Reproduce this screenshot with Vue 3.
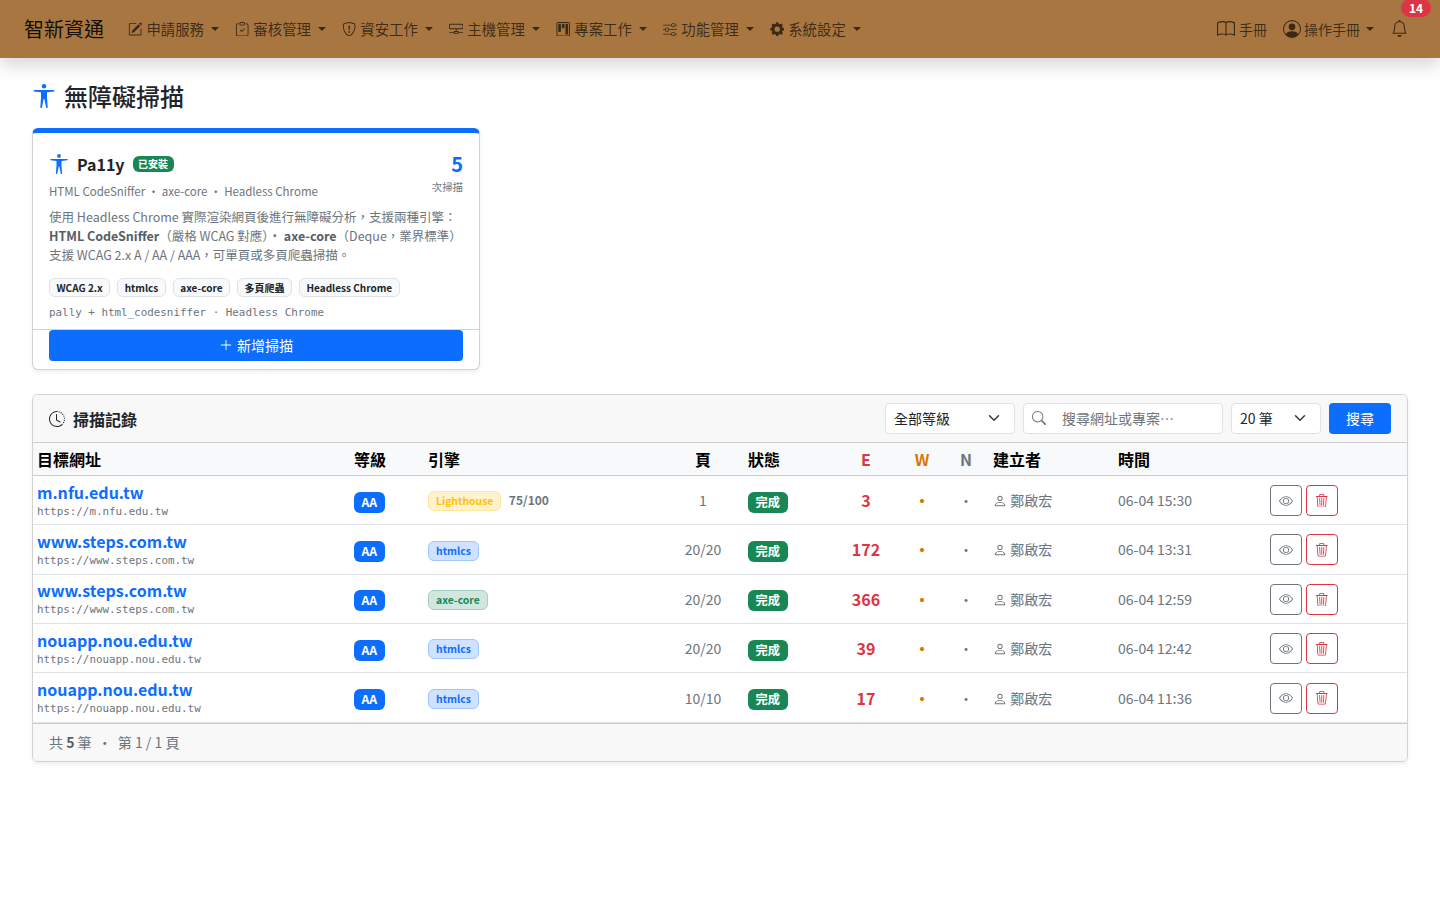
<template>
  <div class="page">
    <nav class="navbar">
      <a class="brand">智新資通</a>
      <ul class="nav-menu">
        <li v-for="item in menus" :key="item.label" class="nav-item">
          <svg class="nav-icon" viewBox="0 0 16 16" fill="currentColor"><path v-for="d in icons[item.icon]" :key="d" fill-rule="evenodd" :d="d" /></svg>
          <span>{{ item.label }}</span>
          <i class="caret"></i>
        </li>
      </ul>
      <div class="nav-right">
        <a class="nav-plain">
          <svg class="book-icon" viewBox="0 0 16 16" fill="currentColor"><path v-for="d in icons.book" :key="d" :d="d" /></svg>
          <span>手冊</span>
        </a>
        <a class="nav-plain user">
          <svg class="user-icon" viewBox="0 0 16 16" fill="currentColor"><path v-for="d in icons.personCircle" :key="d" fill-rule="evenodd" :d="d" /></svg>
          <span>操作手冊</span>
          <i class="caret"></i>
        </a>
        <a class="bell">
          <svg viewBox="0 0 16 16" fill="currentColor"><path v-for="d in icons.bell" :key="d" :d="d" /></svg>
          <span class="bell-badge">14</span>
        </a>
      </div>
    </nav>

    <main class="content">
      <h1 class="page-title">
        <svg viewBox="0 0 16 16" fill="currentColor"><path :d="icons.access[0]" /></svg>
        <span>無障礙掃描</span>
      </h1>

      <section class="tool-card">
        <div class="tool-body">
          <div class="tool-head">
            <div>
              <div class="tool-name">
                <svg viewBox="0 0 16 16" fill="currentColor"><path :d="icons.access[0]" /></svg>
                <strong>Pa11y</strong>
                <span class="installed">已安裝</span>
              </div>
              <div class="tool-sub">HTML CodeSniffer ・ axe-core ・ Headless Chrome</div>
            </div>
            <div class="tool-count">
              <b>5</b>
              <small>次掃描</small>
            </div>
          </div>
          <p class="tool-desc">
            使用 Headless Chrome 實際渲染網頁後進行無障礙分析，支援兩種引擎：<br />
            <b>HTML CodeSniffer</b>（嚴格 WCAG 對應）・ <b>axe-core</b>（Deque，業界標準）<br />
            支援 WCAG 2.x A / AA / AAA，可單頁或多頁爬蟲掃描。
          </p>
          <div class="chips">
            <span v-for="c in chips" :key="c" class="chip">{{ c }}</span>
          </div>
          <div class="tool-cmd">pally + html_codesniffer · Headless Chrome</div>
        </div>
        <div class="tool-foot">
          <button class="new-btn">
            <svg viewBox="0 0 16 16" fill="currentColor"><path fill-rule="evenodd" :d="icons.plus[0]" /></svg>
            新增掃描
          </button>
        </div>
      </section>

      <section class="records">
        <header class="records-head">
          <div class="records-title">
            <svg viewBox="0 0 16 16" fill="currentColor"><path v-for="d in icons.clock" :key="d" :d="d" /></svg>
            <span>掃描記錄</span>
          </div>
          <form class="filters" @submit.prevent>
            <div class="select level">全部等級<svg class="chev" viewBox="0 0 16 16"><path d="m2 5 6 6 6-6" /></svg></div>
            <div class="search">
              <svg viewBox="0 0 16 16" fill="currentColor"><path :d="icons.search[0]" /></svg>
              <span>搜尋網址或專案⋯</span>
            </div>
            <div class="select per">20 筆<svg class="chev" viewBox="0 0 16 16"><path d="m2 5 6 6 6-6" /></svg></div>
            <button class="search-btn">搜尋</button>
          </form>
        </header>

        <table class="scan-table">
          <colgroup>
            <col v-for="w in colWidths" :key="w.k" :style="{ width: w.v + 'px' }" />
          </colgroup>
          <thead>
            <tr>
              <th>目標網址</th>
              <th>等級</th>
              <th>引擎</th>
              <th class="center">頁</th>
              <th>狀態</th>
              <th class="center err">E</th>
              <th class="center warn">W</th>
              <th class="center note">N</th>
              <th>建立者</th>
              <th>時間</th>
              <th></th>
            </tr>
          </thead>
          <tbody>
            <tr v-for="r in rows" :key="r.time">
              <td class="target">
                <a class="host">{{ r.host }}</a>
                <div class="url">{{ r.url }}</div>
              </td>
              <td><span class="badge level-aa">AA</span></td>
              <td>
                <span class="engine" :class="r.engineClass">{{ r.engine }}</span>
                <span v-if="r.score" class="score">{{ r.score }}</span>
              </td>
              <td class="center pages">{{ r.pages }}</td>
              <td><span class="badge done">完成</span></td>
              <td class="center err-num">{{ r.errors }}</td>
              <td class="center dot-w">•</td>
              <td class="center dot-n">•</td>
              <td class="creator">
                <svg viewBox="0 0 16 16" fill="currentColor"><path :d="icons.person[0]" /></svg>
                鄭啟宏
              </td>
              <td class="time">{{ r.time }}</td>
              <td>
                <div class="actions">
                  <button class="act view"><svg viewBox="0 0 16 16" fill="currentColor"><path v-for="d in icons.eye" :key="d" :d="d" /></svg></button>
                  <button class="act del"><svg viewBox="0 0 16 16" fill="currentColor"><path :d="icons.trash[0]" /></svg></button>
                </div>
              </td>
            </tr>
          </tbody>
        </table>

        <footer class="records-foot">共 <b>5</b> 筆 <span class="sep">・</span> 第 1 / 1 頁</footer>
      </section>
    </main>
  </div>
</template>

<script setup>
const icons = {
  pencil: ['M15.502 1.94a.5.5 0 0 1 0 .706L14.459 3.69l-2-2L13.502.646a.5.5 0 0 1 .707 0l1.293 1.293zm-1.75 2.456-2-2L4.939 9.21a.5.5 0 0 0-.121.196l-.805 2.414a.25.25 0 0 0 .316.316l2.414-.805a.5.5 0 0 0 .196-.12l6.813-6.814z', 'M1 13.5A1.5 1.5 0 0 0 2.5 15h11a1.5 1.5 0 0 0 1.5-1.5v-6a.5.5 0 0 0-1 0v6a.5.5 0 0 1-.5.5h-11a.5.5 0 0 1-.5-.5v-11a.5.5 0 0 1 .5-.5H9a.5.5 0 0 0 0-1H2.5A1.5 1.5 0 0 0 1 2.5v11z'],
  clipboard: ['M10.854 7.146a.5.5 0 0 1 0 .708l-3 3a.5.5 0 0 1-.708 0l-1.5-1.5a.5.5 0 1 1 .708-.708L7.5 9.793l2.646-2.647a.5.5 0 0 1 .708 0z', 'M4 1.5H3a2 2 0 0 0-2 2V14a2 2 0 0 0 2 2h10a2 2 0 0 0 2-2V3.5a2 2 0 0 0-2-2h-1v1h1a1 1 0 0 1 1 1V14a1 1 0 0 1-1 1H3a1 1 0 0 1-1-1V3.5a1 1 0 0 1 1-1h1v-1z', 'M9.5 1a.5.5 0 0 1 .5.5v1a.5.5 0 0 1-.5.5h-3a.5.5 0 0 1-.5-.5v-1a.5.5 0 0 1 .5-.5h3zm-3-1A1.5 1.5 0 0 0 5 1.5v1A1.5 1.5 0 0 0 6.5 4h3A1.5 1.5 0 0 0 11 2.5v-1A1.5 1.5 0 0 0 9.5 0h-3z'],
  shield: ['M5.338 1.59a61.44 61.44 0 0 0-2.837.856.481.481 0 0 0-.328.39c-.554 4.157.726 7.19 2.253 9.188a10.725 10.725 0 0 0 2.287 2.233c.346.244.652.42.893.533.12.057.218.095.293.118a.55.55 0 0 0 .101.025.615.615 0 0 0 .1-.025c.076-.023.174-.061.294-.118.24-.113.547-.29.893-.533a10.726 10.726 0 0 0 2.287-2.233c1.527-1.997 2.807-5.031 2.253-9.188a.48.48 0 0 0-.328-.39c-.651-.213-1.75-.56-2.837-.855C9.552 1.29 8.531 1.067 8 1.067c-.53 0-1.552.223-2.662.524zM5.072.56C6.157.265 7.31 0 8 0s1.843.265 2.928.56c1.11.3 2.229.655 2.887.87a1.54 1.54 0 0 1 1.044 1.262c.596 4.477-.787 7.795-2.465 9.99a11.775 11.775 0 0 1-2.517 2.453 7.159 7.159 0 0 1-1.048.625c-.28.132-.581.24-.829.24s-.548-.108-.829-.24a7.158 7.158 0 0 1-1.048-.625 11.777 11.777 0 0 1-2.517-2.453C1.928 10.487.545 7.169 1.141 2.692A1.54 1.54 0 0 1 2.185 1.43 62.456 62.456 0 0 1 5.072.56z', 'M7.001 11a1 1 0 1 1 2 0 1 1 0 0 1-2 0zM7.1 4.995a.905.905 0 1 1 1.8 0l-.35 3.507a.552.552 0 0 1-1.1 0L7.1 4.995z'],
  server: ['M1.5 2h13A1.5 1.5 0 0 1 16 3.5v3A1.5 1.5 0 0 1 14.5 8H8.5v2H10a1 1 0 0 1 1 1h4.5a.5.5 0 0 1 0 1H11a1 1 0 0 1-1 1H6a1 1 0 0 1-1-1H.5a.5.5 0 0 1 0-1H5a1 1 0 0 1 1-1h1.5V8h-6A1.5 1.5 0 0 1 0 6.5v-3A1.5 1.5 0 0 1 1.5 2zm0 1a.5.5 0 0 0-.5.5v3a.5.5 0 0 0 .5.5h13a.5.5 0 0 0 .5-.5v-3a.5.5 0 0 0-.5-.5h-13zM6 11v1h4v-1H6z'],
  kanban: ['M13.5 1a1 1 0 0 1 1 1v12a1 1 0 0 1-1 1h-11a1 1 0 0 1-1-1V2a1 1 0 0 1 1-1h11zm-11-1a2 2 0 0 0-2 2v12a2 2 0 0 0 2 2h11a2 2 0 0 0 2-2V2a2 2 0 0 0-2-2h-11z', 'M6.5 3a1 1 0 0 1 1-1h1a1 1 0 0 1 1 1v3a1 1 0 0 1-1 1h-1a1 1 0 0 1-1-1V3zm-4 0a1 1 0 0 1 1-1h1a1 1 0 0 1 1 1v7a1 1 0 0 1-1 1h-1a1 1 0 0 1-1-1V3zm8 0a1 1 0 0 1 1-1h1a1 1 0 0 1 1 1v10a1 1 0 0 1-1 1h-1a1 1 0 0 1-1-1V3z'],
  sliders: ['M11.5 2a1.5 1.5 0 1 0 0 3 1.5 1.5 0 0 0 0-3zM9.05 3a2.5 2.5 0 0 1 4.9 0H16v1h-2.05a2.5 2.5 0 0 1-4.9 0H0V3h9.05zM4.5 7a1.5 1.5 0 1 0 0 3 1.5 1.5 0 0 0 0-3zM2.05 8a2.5 2.5 0 0 1 4.9 0H16v1H6.95a2.5 2.5 0 0 1-4.9 0H0V8h2.05zm9.45 4a1.5 1.5 0 1 0 0 3 1.5 1.5 0 0 0 0-3zm-2.45 1a2.5 2.5 0 0 1 4.9 0H16v1h-2.05a2.5 2.5 0 0 1-4.9 0H0v-1h9.05z'],
  gear: ['M9.405 1.05c-.413-1.4-2.397-1.4-2.81 0l-.1.34a1.464 1.464 0 0 1-2.105.872l-.31-.17c-1.283-.698-2.686.705-1.987 1.987l.169.311c.446.82.023 1.841-.872 2.105l-.34.1c-1.4.413-1.4 2.397 0 2.81l.34.1a1.464 1.464 0 0 1 .872 2.105l-.17.31c-.698 1.283.705 2.686 1.987 1.987l.311-.169a1.464 1.464 0 0 1 2.105.872l.1.34c.413 1.4 2.397 1.4 2.81 0l.1-.34a1.464 1.464 0 0 1 2.105-.872l.31.17c1.283.698 2.686-.705 1.987-1.987l-.169-.311a1.464 1.464 0 0 1 .872-2.105l.34-.1c1.4-.413 1.4-2.397 0-2.81l-.34-.1a1.464 1.464 0 0 1-.872-2.105l.17-.31c.698-1.283-.705-2.686-1.987-1.987l-.311.169a1.464 1.464 0 0 1-2.105-.872l-.1-.34zM8 10.93a2.929 2.929 0 1 1 0-5.86 2.929 2.929 0 0 1 0 5.858z'],
  book: ['M1 2.828c.885-.37 2.154-.769 3.388-.893 1.33-.134 2.458.063 3.112.752v9.746c-.935-.53-2.12-.603-3.213-.493-1.18.12-2.37.461-3.287.811V2.828zm7.5-.141c.654-.689 1.782-.886 3.112-.752 1.234.124 2.503.523 3.388.893v9.923c-.918-.35-2.107-.692-3.287-.81-1.094-.111-2.278-.039-3.213.492V2.687zM8 1.783C7.015.936 5.587.81 4.287.94c-1.514.153-3.042.672-3.994 1.105A.5.5 0 0 0 0 2.5v11a.5.5 0 0 0 .707.455c.882-.4 2.303-.881 3.68-1.02 1.409-.142 2.59.087 3.223.877a.5.5 0 0 0 .78 0c.633-.79 1.814-1.019 3.222-.877 1.378.139 2.8.62 3.681 1.02A.5.5 0 0 0 16 13.5v-11a.5.5 0 0 0-.293-.455c-.952-.433-2.48-.952-3.994-1.105C10.413.809 8.985.936 8 1.783z'],
  personCircle: ['M11 6a3 3 0 1 1-6 0 3 3 0 0 1 6 0z', 'M0 8a8 8 0 1 1 16 0A8 8 0 0 1 0 8zm8-7a7 7 0 0 0-5.468 11.37C3.242 11.226 4.805 10 8 10s4.757 1.225 5.468 2.37A7 7 0 0 0 8 1z'],
  bell: ['M8 16a2 2 0 0 0 2-2H6a2 2 0 0 0 2 2zM8 1.918l-.797.161A4.002 4.002 0 0 0 4 6c0 .628-.134 2.197-.459 3.742-.16.767-.376 1.566-.663 2.258h10.244c-.287-.692-.502-1.49-.663-2.258C12.134 8.197 12 6.628 12 6a4.002 4.002 0 0 0-3.203-3.92L8 1.917zM14.22 12c.223.447.481.801.78 1H1c.299-.199.557-.553.78-1C2.68 10.2 3 6.88 3 6c0-2.42 1.72-4.44 4.005-4.901a1 1 0 1 1 1.99 0A5.002 5.002 0 0 1 13 6c0 .88.32 4.2 1.22 6z'],
  access: ['M9.5 1.5a1.5 1.5 0 1 1-3 0 1.5 1.5 0 0 1 3 0M6 5.5l-4.535-.442A.531.531 0 0 1 1.531 4H14.47a.531.531 0 0 1 .066 1.058L10 5.5V9l.452 6.42a.535.535 0 0 1-1.053.174L8.243 9.97c-.064-.252-.422-.252-.486 0l-1.156 5.624a.535.535 0 0 1-1.053-.174L6 9z'],
  clock: ['M8.515 1.019A7 7 0 0 0 8 1V0a8 8 0 0 1 .589.022l-.074.997zm2.004.45a7.003 7.003 0 0 0-.985-.299l.219-.976c.383.086.76.2 1.126.342l-.36.933zm1.37.71a7.01 7.01 0 0 0-.439-.27l.493-.87a8.025 8.025 0 0 1 .979.654l-.615.789a6.996 6.996 0 0 0-.418-.302zm1.834 1.79a6.99 6.99 0 0 0-.653-.796l.724-.69c.27.285.52.59.747.91l-.818.576zm.744 1.352a7.08 7.08 0 0 0-.214-.468l.893-.45a7.976 7.976 0 0 1 .45 1.088l-.95.313a7.023 7.023 0 0 0-.179-.483zm.53 2.507a6.991 6.991 0 0 0-.1-1.025l.985-.17c.067.386.106.778.116 1.17l-1 .025zm-.131 1.538c.033-.17.06-.339.081-.51l.993.123a7.957 7.957 0 0 1-.23 1.155l-.964-.267c.046-.165.086-.332.12-.501zm-.952 2.379c.184-.29.346-.594.486-.908l.914.405c-.16.36-.345.706-.555 1.038l-.845-.535zm-.964 1.205c.122-.122.239-.248.35-.378l.758.653a8.073 8.073 0 0 1-.401.432l-.707-.707z', 'M8 1a7 7 0 1 0 4.95 11.95l.707.707A8.001 8.001 0 1 1 8 0v1z', 'M7.5 3a.5.5 0 0 1 .5.5v5.21l3.248 1.856a.5.5 0 0 1-.496.868l-3.5-2A.5.5 0 0 1 7 9V3.5a.5.5 0 0 1 .5-.5z'],
  search: ['M11.742 10.344a6.5 6.5 0 1 0-1.397 1.398h-.001c.03.04.062.078.098.115l3.85 3.85a1 1 0 0 0 1.415-1.414l-3.85-3.85a1.007 1.007 0 0 0-.115-.1zM12 6.5a5.5 5.5 0 1 1-11 0 5.5 5.5 0 0 1 11 0z'],
  plus: ['M8 2a.5.5 0 0 1 .5.5v5h5a.5.5 0 0 1 0 1h-5v5a.5.5 0 0 1-1 0v-5h-5a.5.5 0 0 1 0-1h5v-5A.5.5 0 0 1 8 2Z'],
  eye: ['M16 8s-3-5.5-8-5.5S0 8 0 8s3 5.5 8 5.5S16 8 16 8zM1.173 8a13.133 13.133 0 0 1 1.66-2.043C4.12 4.668 5.88 3.5 8 3.5c2.12 0 3.879 1.168 5.168 2.457A13.133 13.133 0 0 1 14.828 8c-.058.087-.122.183-.195.288-.335.48-.83 1.12-1.465 1.755C11.879 11.332 10.119 12.5 8 12.5c-2.12 0-3.879-1.168-5.168-2.457A13.134 13.134 0 0 1 1.172 8z', 'M8 5.5a2.5 2.5 0 1 0 0 5 2.5 2.5 0 0 0 0-5zM4.5 8a3.5 3.5 0 1 1 7 0 3.5 3.5 0 0 1-7 0z'],
  trash: ['M6.5 1h3a.5.5 0 0 1 .5.5v1H6v-1a.5.5 0 0 1 .5-.5ZM11 2.5v-1A1.5 1.5 0 0 0 9.5 0h-3A1.5 1.5 0 0 0 5 1.5v1H2.506a.58.58 0 0 0-.01 0H1.5a.5.5 0 0 0 0 1h.538l.853 10.66A2 2 0 0 0 4.885 16h6.23a2 2 0 0 0 1.994-1.84l.853-10.66h.538a.5.5 0 0 0 0-1h-.995a.59.59 0 0 0-.01 0H11Zm1.958 1-.846 10.58a1 1 0 0 1-.997.92h-6.23a1 1 0 0 1-.997-.92L3.042 3.5h9.916Zm-7.487 1a.5.5 0 0 1 .528.47l.5 8.5a.5.5 0 0 1-.998.06L5 5.03a.5.5 0 0 1 .47-.53Zm5.058 0a.5.5 0 0 1 .47.53l-.5 8.5a.5.5 0 1 1-.998-.06l.5-8.5a.5.5 0 0 1 .528-.47ZM8 4.5a.5.5 0 0 1 .5.5v8.5a.5.5 0 0 1-1 0V5a.5.5 0 0 1 .5-.5Z'],
  person: ['M8 8a3 3 0 1 0 0-6 3 3 0 0 0 0 6Zm2-3a2 2 0 1 1-4 0 2 2 0 0 1 4 0Zm4 8c0 1-1 1-1 1H3s-1 0-1-1 1-4 6-4 6 3 6 4Zm-1-.004c-.001-.246-.154-.986-.832-1.664C11.516 10.68 10.289 10 8 10c-2.29 0-3.516.68-4.168 1.332-.678.678-.83 1.418-.832 1.664h10Z'],
}

const menus = [
  { label: '申請服務', icon: 'pencil' },
  { label: '審核管理', icon: 'clipboard' },
  { label: '資安工作', icon: 'shield' },
  { label: '主機管理', icon: 'server' },
  { label: '專案工作', icon: 'kanban' },
  { label: '功能管理', icon: 'sliders' },
  { label: '系統設定', icon: 'gear' },
]

const chips = ['WCAG 2.x', 'htmlcs', 'axe-core', '多頁爬蟲', 'Headless Chrome']

const colWidths = [
  { k: 'url', v: 317 }, { k: 'level', v: 74 }, { k: 'engine', v: 238 }, { k: 'pages', v: 82 },
  { k: 'status', v: 87 }, { k: 'e', v: 70 }, { k: 'w', v: 42 }, { k: 'n', v: 46 },
  { k: 'user', v: 125 }, { k: 'time', v: 152 }, { k: 'act', v: 141 },
]

const rows = [
  { host: 'm.nfu.edu.tw', url: 'https://m.nfu.edu.tw', engine: 'Lighthouse', engineClass: 'lh', score: '75/100', pages: '1', errors: 3, time: '06-04 15:30' },
  { host: 'www.steps.com.tw', url: 'https://www.steps.com.tw', engine: 'htmlcs', engineClass: 'cs', pages: '20/20', errors: 172, time: '06-04 13:31' },
  { host: 'www.steps.com.tw', url: 'https://www.steps.com.tw', engine: 'axe-core', engineClass: 'axe', pages: '20/20', errors: 366, time: '06-04 12:59' },
  { host: 'nouapp.nou.edu.tw', url: 'https://nouapp.nou.edu.tw', engine: 'htmlcs', engineClass: 'cs', pages: '20/20', errors: 39, time: '06-04 12:42' },
  { host: 'nouapp.nou.edu.tw', url: 'https://nouapp.nou.edu.tw', engine: 'htmlcs', engineClass: 'cs', pages: '10/10', errors: 17, time: '06-04 11:36' },
]
</script>

<style>
html, body {
  margin: 0;
  background: #fff;
}
</style>

<style scoped>
.page {
  min-height: 900px;
  font-family: "Noto Sans CJK TC", "Noto Sans", sans-serif;
  font-size: 14px;
  color: #212529;
}

/* navbar */
.navbar {
  height: 58px;
  box-sizing: border-box;
  display: flex;
  align-items: center;
  padding: 0 24px;
  background: #a87741;
  box-shadow: 0 8px 16px rgba(0, 0, 0, .15);
  position: relative;
}
.brand {
  font-size: 20px;
  color: rgba(0, 0, 0, .9);
  margin-right: 16px;
  line-height: 30px;
}
.nav-menu {
  display: flex;
  list-style: none;
  margin: 0;
  padding: 0;
  flex: 1;
}
.nav-item {
  display: flex;
  align-items: center;
  padding: 0 8px;
  color: rgba(0, 0, 0, .65);
  font-size: 14.4px;
}
.nav-item span {
  margin-top: -2px;
}
.nav-icon {
  width: 14.4px;
  height: 14.4px;
  margin-right: 4px;
}
.caret {
  display: inline-block;
  margin-left: 7px;
  border-top: 4px solid;
  border-left: 4px solid transparent;
  border-right: 4px solid transparent;
}
.nav-right {
  display: flex;
  align-items: center;
  color: rgba(0, 0, 0, .65);
}
.nav-plain {
  display: flex;
  align-items: center;
}
.book-icon {
  width: 18px;
  height: 18px;
  margin-right: 4px;
}
.user {
  margin-left: 16px;
}
.user .caret {
  margin-left: 6px;
}
.user-icon {
  width: 18px;
  height: 18px;
  margin-right: 3px;
}
.bell {
  position: relative;
  margin-left: 17px;
  margin-right: 8px;
  width: 17px;
  height: 17px;
  display: block;
  margin-top: -2px;
}
.bell svg {
  width: 17px;
  height: 17px;
  display: block;
}
.bell-badge {
  position: absolute;
  top: -21px;
  left: 10px;
  width: 30px;
  height: 18px;
  border-radius: 9px;
  background: #dc3545;
  color: #fff;
  font-size: 12px;
  font-weight: 700;
  line-height: 18px;
  text-align: center;
}

/* page */
.content {
  padding: 21px 32px 0;
}
.page-title {
  display: flex;
  align-items: center;
  margin: 0 0 15px;
  font-size: 24px;
  font-weight: 500;
  line-height: 34px;
}
.page-title svg {
  width: 24px;
  height: 24px;
  color: #0d6efd;
  margin-right: 8px;
}

/* tool card */
.tool-card {
  width: 448px;
  box-sizing: border-box;
  border: 1px solid rgba(0, 0, 0, .175);
  border-top: 5px solid #0d6efd;
  border-radius: 6px;
  box-shadow: 0 2px 4px rgba(0, 0, 0, .075);
  background: #fff;
  margin-bottom: 24px;
}
.tool-body {
  padding: 19px 16px 8px;
}
.tool-head {
  display: flex;
  justify-content: space-between;
}
.tool-name {
  display: flex;
  align-items: center;
}
.tool-name svg {
  width: 20px;
  height: 20px;
  color: #0d6efd;
  margin-right: 8px;
}
.tool-name strong {
  font-size: 16px;
  font-weight: 700;
  margin-right: 8px;
  line-height: 24px;
}
.installed {
  background: #198754;
  color: #fff;
  font-size: 10px;
  font-weight: 700;
  line-height: 16px;
  padding: 0 5.5px;
  border-radius: 6px;
}
.tool-sub {
  font-size: 11.5px;
  color: #6c757d;
  line-height: 18px;
  margin-top: 6px;
}
.tool-count {
  text-align: right;
}
.tool-count b {
  display: block;
  font-size: 20px;
  font-weight: 700;
  color: #0d6efd;
  line-height: 24px;
}
.tool-count small {
  display: block;
  font-size: 10.4px;
  color: #6c757d;
  line-height: 20px;
  margin-top: 1px;
}
.tool-desc {
  margin: 6.5px 0 0;
  font-size: 12.5px;
  line-height: 19px;
  color: #6c757d;
}
.tool-desc b {
  font-weight: 700;
  color: #565e64;
}
.chips {
  display: flex;
  gap: 7px;
  margin-top: 14px;
}
.chip {
  font-size: 10px;
  font-weight: 700;
  line-height: 15px;
  padding: 1px 6.5px;
  border: 1px solid #dee2e6;
  border-radius: 6px;
  background: #f8f9fa;
  color: #212529;
}
.tool-cmd {
  font-family: "DejaVu Sans Mono", monospace;
  font-size: 10.88px;
  line-height: 16px;
  color: #6c757d;
  margin-top: 8px;
}
.tool-foot {
  border-top: 1px solid rgba(0, 0, 0, .175);
  padding: 0 16px 8px;
}
.new-btn {
  display: flex;
  align-items: center;
  justify-content: center;
  width: 100%;
  height: 31px;
  border: none;
  border-radius: 4px;
  background: #0d6efd;
  color: #fff;
  font: inherit;
  font-size: 14px;
}
.new-btn svg {
  width: 14px;
  height: 14px;
  margin-right: 4px;
}

/* records */
.records {
  border: 1px solid rgba(0, 0, 0, .175);
  border-radius: 6px;
  box-shadow: 0 2px 4px rgba(0, 0, 0, .075);
  overflow: hidden;
}
.records-head {
  height: 48px;
  box-sizing: border-box;
  display: flex;
  align-items: center;
  justify-content: space-between;
  padding: 0 16px;
  background: #f8f8f8;
  border-bottom: 1px solid rgba(0, 0, 0, .175);
}
.records-title {
  display: flex;
  align-items: center;
  font-size: 16px;
  font-weight: 700;
  margin-top: 2px;
}
.records-title svg {
  width: 16px;
  height: 16px;
  margin-right: 8px;
}
.filters {
  display: flex;
  align-items: center;
  gap: 8px;
}
.select, .search {
  height: 31px;
  box-sizing: border-box;
  display: flex;
  align-items: center;
  border: 1px solid #dee2e6;
  border-radius: 4px;
  background: #fff;
}
.select {
  justify-content: space-between;
  padding: 0 14px 0 8px;
}
.level { width: 130px; }
.per { width: 90px; }
.chev {
  width: 12px;
  height: 12px;
  fill: none;
  stroke: #343a40;
  stroke-width: 2;
  stroke-linecap: round;
  stroke-linejoin: round;
}
.search {
  width: 200px;
  padding-left: 8px;
  color: #6c757d;
}
.search svg {
  width: 14px;
  height: 14px;
  margin-right: 16px;
}
.search-btn {
  width: 62px;
  height: 31px;
  border: none;
  border-radius: 4px;
  background: #0d6efd;
  color: #fff;
  font: inherit;
}

/* table */
.scan-table {
  width: 100%;
  table-layout: fixed;
  border-collapse: collapse;
}
.scan-table th {
  height: 32.4px;
  padding: 0 4px;
  background: #f8f9fa;
  text-align: left;
  font-size: 16px;
  font-weight: 700;
  color: #000;
  border-bottom: 1px solid rgba(0, 0, 0, .2);
}
.scan-table td {
  height: 48.4px;
  padding: 0 4px;
  border-bottom: 1px solid #dee2e6;
  vertical-align: middle;
}
.scan-table th.center, .scan-table td.center {
  text-align: center;
}
.scan-table th.err { color: #dc3545; }
.scan-table th.warn { color: #d97706; }
.scan-table th.note { color: #6c757d; }
.host {
  display: block;
  font-size: 16px;
  font-weight: 700;
  color: #0d6efd;
  line-height: 20px;
  margin-bottom: 3px;
}
.url {
  font-family: "DejaVu Sans Mono", monospace;
  font-size: 10.88px;
  line-height: 14px;
  color: #6c757d;
}
.badge {
  display: inline-block;
  padding: 0 7.5px;
  font-size: 12.25px;
  font-weight: 700;
  line-height: 21px;
  border-radius: 6px;
  color: #fff;
  vertical-align: middle;
  margin-top: 4px;
}
.level-aa { background: #0d6efd; }
.done { background: #198754; }
.engine {
  display: inline-block;
  font-size: 10.4px;
  font-weight: 700;
  line-height: 18px;
  padding: 0 7px;
  border-radius: 6px;
  border: 1px solid;
  vertical-align: middle;
}
.lh { background: #fff3cd; border-color: #ffe69c; color: #ffc107; }
.cs { background: #cfe2ff; border-color: #9ec5fe; color: #0d6efd; }
.axe { background: #d1e7dd; border-color: #a3cfbb; color: #198754; }
.score {
  margin-left: 7.5px;
  font-size: 12px;
  font-weight: 700;
  color: #6c757d;
}
.pages {
  color: #6c757d;
}
.err-num {
  font-size: 16px;
  font-weight: 700;
  color: #dc3545;
}
.dot-w {
  color: #d97706;
  font-size: 16px;
  font-weight: 700;
}
.dot-n { color: #6c757d; }
.creator {
  color: #6c757d;
}
.creator svg {
  width: 14px;
  height: 14px;
  vertical-align: -2px;
}
.time {
  color: #6c757d;
}
.actions {
  display: flex;
  gap: 4px;
  margin-top: 1px;
}
.act {
  width: 32px;
  height: 31px;
  padding: 0;
  display: flex;
  align-items: center;
  justify-content: center;
  background: #fff;
  border-radius: 4px;
  border: 1px solid;
}
.act svg {
  width: 14px;
  height: 14px;
}
.act.del svg {
  width: 13.5px;
  height: 13.5px;
}
.view { border-color: #6c757d; color: #6c757d; }
.del { border-color: #dc3545; color: #dc3545; }

.records-foot {
  height: 38px;
  box-sizing: border-box;
  line-height: 37px;
  padding: 0 16px;
  background: #f8f8f8;
  border-top: 1px solid rgba(0, 0, 0, .175);
  color: #6c757d;
}
.records-foot b {
  font-weight: 700;
  color: #565e64;
}
.sep {
  margin: 0 3px;
}
</style>
